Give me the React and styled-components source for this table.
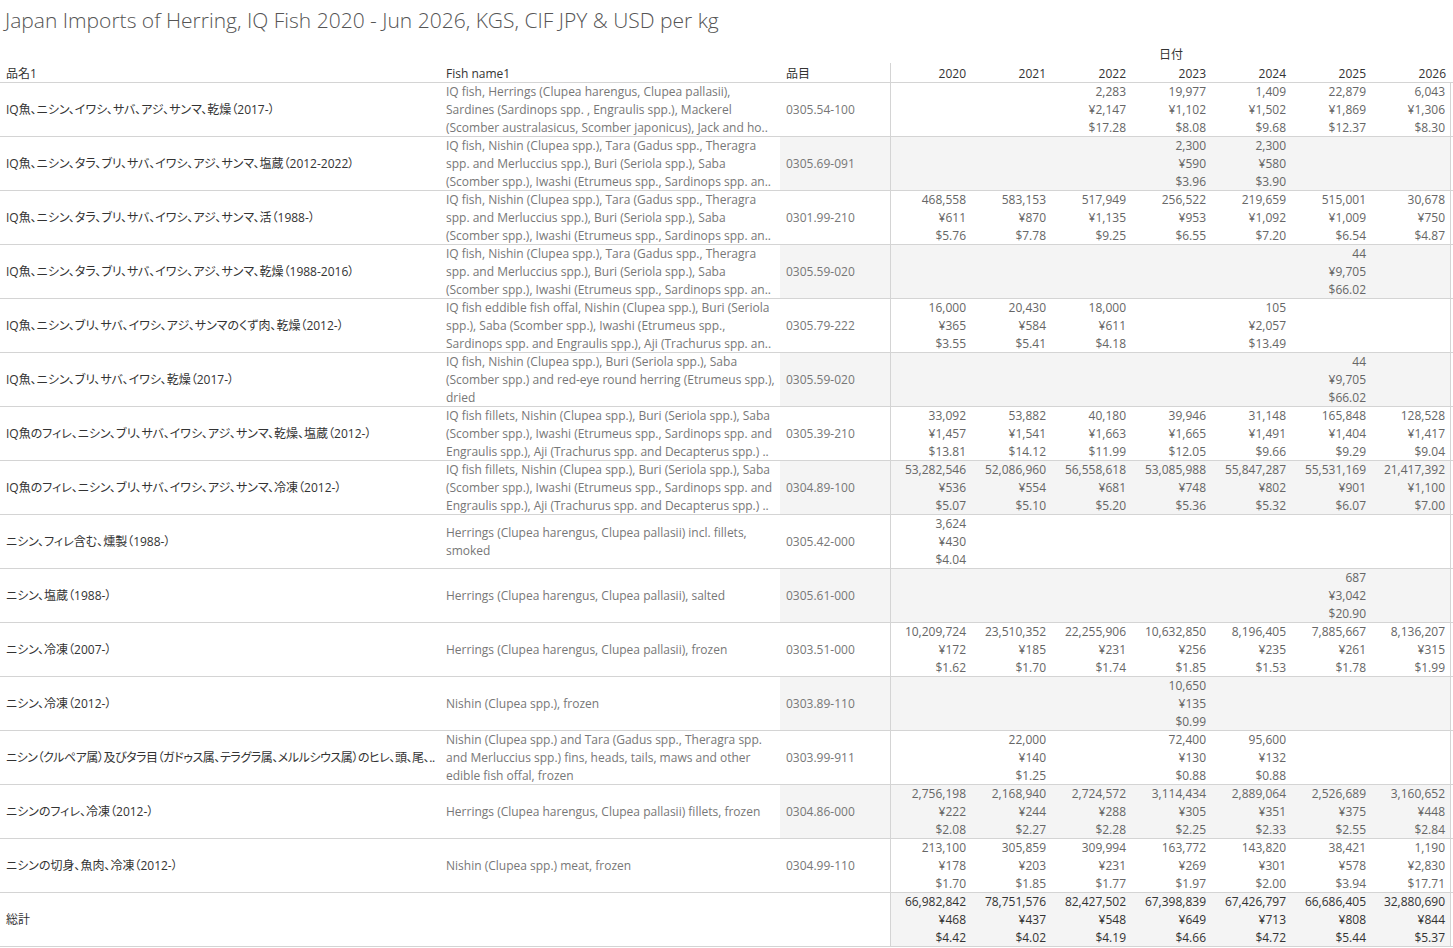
import React from "react";
import styled, { createGlobalStyle } from "styled-components";

const GlobalStyle = createGlobalStyle`
  body {
    margin: 0;
    background: #fff;
    font-family: "Open Sans", "Noto Sans CJK JP", sans-serif;
    font-size: 12px;
    font-feature-settings: "palt";
  }
`;

const YEARS = ["2020", "2021", "2022", "2023", "2024", "2025", "2026"];

const ROWS = [
  {
    name: "IQ魚、ニシン、イワシ、サバ、アジ、サンマ、乾燥（2017-）",
    fish: [
      "IQ fish, Herrings (Clupea harengus, Clupea pallasii),",
      "Sardines (Sardinops spp. , Engraulis spp.), Mackerel",
      "(Scomber australasicus, Scomber japonicus),  Jack and ho..",
    ],
    code: "0305.54-100",
    values: {
      2022: ["2,283", "¥2,147", "$17.28"],
      2023: ["19,977", "¥1,102", "$8.08"],
      2024: ["1,409", "¥1,502", "$9.68"],
      2025: ["22,879", "¥1,869", "$12.37"],
      2026: ["6,043", "¥1,306", "$8.30"],
    },
  },
  {
    name: "IQ魚、ニシン、タラ、ブリ、サバ、イワシ、アジ、サンマ、塩蔵（2012-2022）",
    fish: [
      "IQ fish, Nishin (Clupea spp.), Tara (Gadus spp., Theragra",
      "spp. and Merluccius spp.), Buri (Seriola spp.), Saba",
      "(Scomber spp.), Iwashi (Etrumeus spp., Sardinops spp. an..",
    ],
    code: "0305.69-091",
    values: {
      2023: ["2,300", "¥590", "$3.96"],
      2024: ["2,300", "¥580", "$3.90"],
    },
  },
  {
    name: "IQ魚、ニシン、タラ、ブリ、サバ、イワシ、アジ、サンマ、活（1988-）",
    fish: [
      "IQ fish, Nishin (Clupea spp.), Tara (Gadus spp., Theragra",
      "spp. and Merluccius spp.), Buri (Seriola spp.), Saba",
      "(Scomber spp.), Iwashi (Etrumeus spp., Sardinops spp. an..",
    ],
    code: "0301.99-210",
    values: {
      2020: ["468,558", "¥611", "$5.76"],
      2021: ["583,153", "¥870", "$7.78"],
      2022: ["517,949", "¥1,135", "$9.25"],
      2023: ["256,522", "¥953", "$6.55"],
      2024: ["219,659", "¥1,092", "$7.20"],
      2025: ["515,001", "¥1,009", "$6.54"],
      2026: ["30,678", "¥750", "$4.87"],
    },
  },
  {
    name: "IQ魚、ニシン、タラ、ブリ、サバ、イワシ、アジ、サンマ、乾燥（1988-2016）",
    fish: [
      "IQ fish, Nishin (Clupea spp.), Tara (Gadus spp., Theragra",
      "spp. and Merluccius spp.), Buri (Seriola spp.), Saba",
      "(Scomber spp.), Iwashi (Etrumeus spp., Sardinops spp. an..",
    ],
    code: "0305.59-020",
    values: {
      2025: ["44", "¥9,705", "$66.02"],
    },
  },
  {
    name: "IQ魚、ニシン、ブリ、サバ、イワシ、アジ、サンマのくず肉、乾燥（2012-）",
    fish: [
      "IQ fish eddible fish offal, Nishin (Clupea spp.), Buri (Seriola",
      "spp.), Saba (Scomber spp.), Iwashi (Etrumeus spp.,",
      "Sardinops spp. and Engraulis spp.), Aji (Trachurus spp. an..",
    ],
    code: "0305.79-222",
    values: {
      2020: ["16,000", "¥365", "$3.55"],
      2021: ["20,430", "¥584", "$5.41"],
      2022: ["18,000", "¥611", "$4.18"],
      2024: ["105", "¥2,057", "$13.49"],
    },
  },
  {
    name: "IQ魚、ニシン、ブリ、サバ、イワシ、乾燥（2017-）",
    fish: [
      "IQ fish, Nishin (Clupea spp.), Buri (Seriola spp.), Saba",
      "(Scomber spp.) and red-eye round herring (Etrumeus spp.),",
      "dried",
    ],
    code: "0305.59-020",
    values: {
      2025: ["44", "¥9,705", "$66.02"],
    },
  },
  {
    name: "IQ魚のフィレ、ニシン、ブリ、サバ、イワシ、アジ、サンマ、乾燥、塩蔵（2012-）",
    fish: [
      "IQ fish fillets, Nishin (Clupea spp.), Buri (Seriola spp.), Saba",
      "(Scomber spp.), Iwashi (Etrumeus spp., Sardinops spp. and",
      "Engraulis spp.), Aji (Trachurus spp. and Decapterus spp.) ..",
    ],
    code: "0305.39-210",
    values: {
      2020: ["33,092", "¥1,457", "$13.81"],
      2021: ["53,882", "¥1,541", "$14.12"],
      2022: ["40,180", "¥1,663", "$11.99"],
      2023: ["39,946", "¥1,665", "$12.05"],
      2024: ["31,148", "¥1,491", "$9.66"],
      2025: ["165,848", "¥1,404", "$9.29"],
      2026: ["128,528", "¥1,417", "$9.04"],
    },
  },
  {
    name: "IQ魚のフィレ、ニシン、ブリ、サバ、イワシ、アジ、サンマ、冷凍（2012-）",
    fish: [
      "IQ fish fillets, Nishin (Clupea spp.), Buri (Seriola spp.), Saba",
      "(Scomber spp.), Iwashi (Etrumeus spp., Sardinops spp. and",
      "Engraulis spp.), Aji (Trachurus spp. and Decapterus spp.) ..",
    ],
    code: "0304.89-100",
    values: {
      2020: ["53,282,546", "¥536", "$5.07"],
      2021: ["52,086,960", "¥554", "$5.10"],
      2022: ["56,558,618", "¥681", "$5.20"],
      2023: ["53,085,988", "¥748", "$5.36"],
      2024: ["55,847,287", "¥802", "$5.32"],
      2025: ["55,531,169", "¥901", "$6.07"],
      2026: ["21,417,392", "¥1,100", "$7.00"],
    },
  },
  {
    name: "ニシン、フィレ含む、燻製（1988-）",
    fish: ["Herrings (Clupea harengus, Clupea pallasii) incl. fillets,", "smoked"],
    code: "0305.42-000",
    values: {
      2020: ["3,624", "¥430", "$4.04"],
    },
  },
  {
    name: "ニシン、塩蔵（1988-）",
    fish: ["Herrings (Clupea harengus, Clupea pallasii), salted"],
    code: "0305.61-000",
    values: {
      2025: ["687", "¥3,042", "$20.90"],
    },
  },
  {
    name: "ニシン、冷凍（2007-）",
    fish: ["Herrings (Clupea harengus, Clupea pallasii), frozen"],
    code: "0303.51-000",
    values: {
      2020: ["10,209,724", "¥172", "$1.62"],
      2021: ["23,510,352", "¥185", "$1.70"],
      2022: ["22,255,906", "¥231", "$1.74"],
      2023: ["10,632,850", "¥256", "$1.85"],
      2024: ["8,196,405", "¥235", "$1.53"],
      2025: ["7,885,667", "¥261", "$1.78"],
      2026: ["8,136,207", "¥315", "$1.99"],
    },
  },
  {
    name: "ニシン、冷凍（2012-）",
    fish: ["Nishin (Clupea spp.), frozen"],
    code: "0303.89-110",
    values: {
      2023: ["10,650", "¥135", "$0.99"],
    },
  },
  {
    name: "ニシン（クルペア属）及びタラ目（ガドゥス属、テラグラ属、メルルシウス属）のヒレ、頭、尾、..",
    tight: true,
    fish: [
      "Nishin (Clupea spp.) and Tara (Gadus spp., Theragra spp.",
      "and Merluccius spp.) fins, heads, tails, maws and other",
      "edible fish offal, frozen",
    ],
    code: "0303.99-911",
    values: {
      2021: ["22,000", "¥140", "$1.25"],
      2023: ["72,400", "¥130", "$0.88"],
      2024: ["95,600", "¥132", "$0.88"],
    },
  },
  {
    name: "ニシンのフィレ、冷凍（2012-）",
    fish: ["Herrings (Clupea harengus, Clupea pallasii) fillets, frozen"],
    code: "0304.86-000",
    values: {
      2020: ["2,756,198", "¥222", "$2.08"],
      2021: ["2,168,940", "¥244", "$2.27"],
      2022: ["2,724,572", "¥288", "$2.28"],
      2023: ["3,114,434", "¥305", "$2.25"],
      2024: ["2,889,064", "¥351", "$2.33"],
      2025: ["2,526,689", "¥375", "$2.55"],
      2026: ["3,160,652", "¥448", "$2.84"],
    },
  },
  {
    name: "ニシンの切身、魚肉、冷凍（2012-）",
    fish: ["Nishin (Clupea spp.) meat, frozen"],
    code: "0304.99-110",
    values: {
      2020: ["213,100", "¥178", "$1.70"],
      2021: ["305,859", "¥203", "$1.85"],
      2022: ["309,994", "¥231", "$1.77"],
      2023: ["163,772", "¥269", "$1.97"],
      2024: ["143,820", "¥301", "$2.00"],
      2025: ["38,421", "¥578", "$3.94"],
      2026: ["1,190", "¥2,830", "$17.71"],
    },
  },
];

const TOTAL = {
  2020: ["66,982,842", "¥468", "$4.42"],
  2021: ["78,751,576", "¥437", "$4.02"],
  2022: ["82,427,502", "¥548", "$4.19"],
  2023: ["67,398,839", "¥649", "$4.66"],
  2024: ["67,426,797", "¥713", "$4.72"],
  2025: ["66,686,405", "¥808", "$5.44"],
  2026: ["32,880,690", "¥844", "$5.37"],
};

const COLS = "440px 340px 111px repeat(7, 80px)";
const SHADE = "#f4f4f4";
const LINE = "#d4d4d4";

const Page = styled.div`
  width: 1453px;
  height: 948px;
  overflow: hidden;
`;

const Title = styled.h1`
  margin: 0;
  height: 46px;
  padding: 7px 0 0 5px;
  box-sizing: border-box;
  font-size: 21px;
  font-weight: 300;
  color: #555;
  line-height: 26px;
  white-space: nowrap;
`;

const DateBand = styled.div`
  display: grid;
  grid-template-columns: 891px 560px;
  height: 17px;
  line-height: 17px;
  color: #333;
`;

const DateLabel = styled.div`
  grid-column: 2;
  text-align: center;
`;

const HeaderRow = styled.div`
  display: grid;
  grid-template-columns: ${COLS};
  height: 19px;
  border-bottom: 1px solid ${LINE};
  color: #333;
  line-height: 21px;
`;

const HeadCell = styled.div`
  padding: 0 6px;
  text-align: ${(p) => (p.$num ? "right" : "left")};
  padding-right: ${(p) => (p.$num ? "5px" : "6px")};
  border-right: ${(p) => (p.$divider ? `1px solid ${LINE}` : "none")};
  white-space: nowrap;
`;

const Row = styled.div`
  display: grid;
  grid-template-columns: ${COLS};
  height: 53px;
  border-bottom: 1px solid ${LINE};
  line-height: 18px;
`;

const Cell = styled.div`
  display: flex;
  flex-direction: column;
  justify-content: center;
  overflow: hidden;
  white-space: nowrap;
  padding: 0 6px;
`;

const NameCell = styled(Cell)`
  color: #333;
  letter-spacing: ${(p) => (p.$tight ? "-0.45px" : "normal")};
`;

const FishCell = styled(Cell)`
  color: #777;
`;

const CodeCell = styled(Cell)`
  color: #777;
  background: ${(p) => (p.$shaded ? SHADE : "transparent")};
  border-right: 1px solid ${LINE};
`;

const ValueCell = styled(Cell)`
  align-items: flex-end;
  padding: 0 5px 0 0;
  color: ${(p) => (p.$total ? "#333" : "#666")};
  background: ${(p) => (p.$shaded ? SHADE : "transparent")};
  border-right: ${(p) => (p.$last ? `1px solid ${LINE}` : "none")};
`;

const TotalLabel = styled(Cell)`
  grid-column: 1 / 4;
  color: #333;
  border-right: 1px solid ${LINE};
`;

function Values({ values, shaded, total }) {
  return YEARS.map((y, i) => (
    <ValueCell key={y} $shaded={shaded} $total={total} $last={i === YEARS.length - 1}>
      {(values[y] || []).map((v, j) => (
        <span key={j}>{v}</span>
      ))}
    </ValueCell>
  ));
}

export default function App() {
  return (
    <Page>
      <GlobalStyle />
      <Title>Japan Imports of Herring, IQ Fish 2020 - Jun 2026, KGS, CIF JPY &amp; USD per kg</Title>
      <DateBand>
        <DateLabel>日付</DateLabel>
      </DateBand>
      <HeaderRow>
        <HeadCell>品名1</HeadCell>
        <HeadCell>Fish name1</HeadCell>
        <HeadCell $divider>品目</HeadCell>
        {YEARS.map((y) => (
          <HeadCell key={y} $num>
            {y}
          </HeadCell>
        ))}
      </HeaderRow>
      {ROWS.map((r, i) => {
        const shaded = i % 2 === 1;
        return (
          <Row key={i}>
            <NameCell $tight={r.tight}>{r.name}</NameCell>
            <FishCell>
              {r.fish.map((l, j) => (
                <span key={j}>{l}</span>
              ))}
            </FishCell>
            <CodeCell $shaded={shaded}>{r.code}</CodeCell>
            <Values values={r.values} shaded={shaded} />
          </Row>
        );
      })}
      <Row>
        <TotalLabel>総計</TotalLabel>
        <Values values={TOTAL} shaded total />
      </Row>
    </Page>
  );
}
